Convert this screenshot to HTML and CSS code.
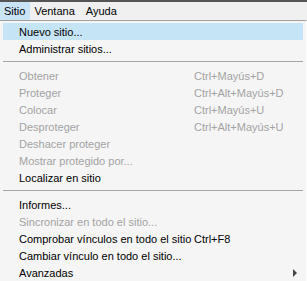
FILE: index.html
```html
<!DOCTYPE html>
<html lang="es">
<head>
  <meta charset="UTF-8">
  <title>Menú Sitio</title>
  <link rel="stylesheet" href="styles.css">
</head>
<body>
  <div class="window">
    <div class="menubar">
      <span class="menubar-item open">Sitio</span>
      <span class="menubar-item">Ventana</span>
      <span class="menubar-item">Ayuda</span>
    </div>

    <!-- Menú desplegable de Sitio -->
    <ul class="menu">
      <li class="menu-item hover"><span class="label">Nuevo sitio...</span></li>
      <li class="menu-item"><span class="label">Administrar sitios...</span></li>
      <li class="separator"></li>
      <li class="menu-item disabled"><span class="label">Obtener</span><span class="key">Ctrl+Mayús+D</span></li>
      <li class="menu-item disabled"><span class="label">Proteger</span><span class="key">Ctrl+Alt+Mayús+D</span></li>
      <li class="menu-item disabled"><span class="label">Colocar</span><span class="key">Ctrl+Mayús+U</span></li>
      <li class="menu-item disabled"><span class="label">Desproteger</span><span class="key">Ctrl+Alt+Mayús+U</span></li>
      <li class="menu-item disabled"><span class="label">Deshacer proteger</span></li>
      <li class="menu-item disabled"><span class="label">Mostrar protegido por...</span></li>
      <li class="menu-item"><span class="label">Localizar en sitio</span></li>
      <li class="separator"></li>
      <li class="menu-item"><span class="label">Informes...</span></li>
      <li class="menu-item disabled"><span class="label">Sincronizar en todo el sitio...</span></li>
      <li class="menu-item"><span class="label">Comprobar vínculos en todo el sitio</span><span class="key">Ctrl+F8</span></li>
      <li class="menu-item"><span class="label">Cambiar vínculo en todo el sitio...</span></li>
      <li class="menu-item"><span class="label">Avanzadas</span><span class="submenu-arrow"></span></li>
    </ul>
  </div>
</body>
</html>
```

FILE: styles.css
```css
body {
  margin: 0;
  background: #f5f5f5;
  font-family: Tahoma, "Liberation Sans", Arial, sans-serif;
  font-size: 11px;
  color: #000;
}

.window {
  width: 307px;
  height: 281px;
  border-top: 2px solid #555;
  box-sizing: border-box;
  overflow: hidden;
}

.menubar {
  display: flex;
  height: 18px;
  background: #f0f0f0;
}

.menubar-item {
  display: flex;
  align-items: center;
  padding: 0 7px 0 4px;
}

.menubar-item.open {
  background: #c8e4f5;
  padding-right: 5px;
}

/* Lista del menú */
.menu {
  list-style: none;
  margin: 0;
  padding: 2px 3px 0 3px;
  border-top: 1px solid #a0a0a0;
  border-right: 1px solid #fff;
  background: #f5f5f5;
}

.menu-item {
  display: flex;
  align-items: center;
  height: 17px;
  padding-left: 16px;
  position: relative;
}

.menu-item.hover {
  background: #c5e4f6;
}

.menu-item.disabled {
  color: #a3a3a3;
}

.label {
  flex: 0 0 175px;
  white-space: nowrap;
}

.key {
  white-space: nowrap;
}

.separator {
  height: 1px;
  background: #a6a6a6;
  margin: 4px 0 5px 0;
}

.submenu-arrow {
  position: absolute;
  right: 6px;
  top: 5px;
  width: 0;
  height: 0;
  border-top: 4px solid transparent;
  border-bottom: 4px solid transparent;
  border-left: 4px solid #444;
}
```
